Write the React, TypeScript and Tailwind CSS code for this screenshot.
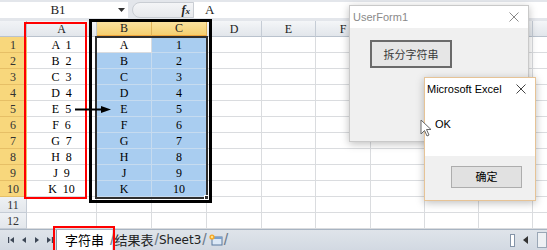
import React from "react";

const serif = "font-['Liberation_Serif','Noto_Sans_CJK_SC',serif]";
const sans = "font-['Liberation_Sans','Noto_Sans_CJK_SC',sans-serif]";

const colW = [
  "w-[70px]",
  "w-[55px]",
  "w-[55px]",
  "w-[55px]",
  "w-[54px]",
  "w-[55px]",
  "w-[54px]",
  "w-[54px]",
  "w-[54px]",
  "w-[54px]",
];
const letters = ["A", "B", "C", "D", "E", "F", "G", "H", "I", ""];
const aVals = ["A  1", "B  2", "C  3", "D  4", "E  5", "F  6", "G  7", "H  8", "J  9", "K  10"];
const bVals = ["A", "B", "C", "D", "E", "F", "G", "H", "J", "K"];

function XIcon({ color = "#6b6b6b" }: { color?: string }) {
  return (
    <svg width="10" height="10" viewBox="0 0 10 10">
      <line x1="0.5" y1="0.5" x2="9.5" y2="9.5" stroke={color} strokeWidth="1" />
      <line x1="9.5" y1="0.5" x2="0.5" y2="9.5" stroke={color} strokeWidth="1" />
    </svg>
  );
}

function HeaderRow() {
  return (
    <div className="flex h-[16px]">
      <div className="w-[27px] h-full shrink-0 box-border border-r border-b border-[#b9c2cd] bg-gradient-to-b from-[#f1f3f6] to-[#e3e7ec]" />
      {letters.map((l, i) => {
        const sel = i === 1 || i === 2;
        return (
          <div
            key={i}
            className={
              colW[i] +
              " h-full shrink-0 box-border border-r flex items-center justify-center text-[12px] text-[#222] " +
              serif +
              (sel
                ? " bg-gradient-to-b from-[#fbe3a0] to-[#f5cf6f] border-[#e0b45a] border-b-2 border-b-[#f0a43a]"
                : " bg-gradient-to-b from-[#f4f6f8] to-[#e2e6eb] border-[#c5ccd5] border-b border-b-[#b9c2cd]")
            }
          >
            {l}
          </div>
        );
      })}
    </div>
  );
}

function DataRow({ r }: { r: number }) {
  const inData = r <= 10;
  return (
    <div className="flex h-[16px]">
      <div
        className={
          "w-[27px] h-full shrink-0 box-border border-r border-b flex items-center justify-center text-[12px] text-[#333] " +
          serif +
          (inData
            ? " bg-[#f8d77c] border-[#e6bf66]"
            : " bg-gradient-to-b from-[#eef1f4] to-[#e3e7ec] border-[#c5ccd5]")
        }
      >
        {r}
      </div>
      {letters.map((l, i) => {
        let text = "";
        let cls = " bg-white border-[#dadcdf]";
        if (inData && i === 0) text = aVals[r - 1];
        if (inData && i === 1) {
          text = bVals[r - 1];
          if (r > 1) cls = " bg-[#a9cdf0] border-[#c6dbef]";
        }
        if (inData && i === 2) {
          text = String(r);
          cls = " bg-[#a9cdf0] border-[#c6dbef]";
        }
        return (
          <div
            key={i}
            className={
              colW[i] +
              " h-full shrink-0 box-border border-r border-b flex items-center justify-center text-[12px] text-black whitespace-pre " +
              serif +
              cls
            }
          >
            {text}
          </div>
        );
      })}
    </div>
  );
}

function NavArrow({ kind }: { kind: number }) {
  return (
    <svg width="8" height="8" viewBox="0 0 8 8">
      {kind === 0 && (
        <>
          <rect x="1" y="1" width="1.2" height="6" fill="#3d4756" />
          <polygon points="7,1 3,4 7,7" fill="#3d4756" />
        </>
      )}
      {kind === 1 && <polygon points="6,1 2,4 6,7" fill="#3d4756" />}
      {kind === 2 && <polygon points="2,1 6,4 2,7" fill="#3d4756" />}
      {kind === 3 && (
        <>
          <polygon points="1,1 5,4 1,7" fill="#3d4756" />
          <rect x="5.8" y="1" width="1.2" height="6" fill="#3d4756" />
        </>
      )}
    </svg>
  );
}

export default function App() {
  const rows = Array.from({ length: 12 }, (_, i) => i + 1);
  return (
    <div className="relative w-[547px] h-[250px] overflow-hidden bg-white">
      {/* formula bar */}
      <div className="flex h-[21px] bg-[#e3e6eb] pt-[2px] pb-[3px] box-border">
        <div className={"relative w-[128px] h-full bg-white flex items-center justify-center text-[13px] text-[#222] " + serif}>
          <span className="pr-[12px]">B1</span>
          <svg className="absolute right-[3px] top-[6px]" width="7" height="4" viewBox="0 0 7 4">
            <polygon points="0,0 7,0 3.5,4" fill="#333" />
          </svg>
        </div>
        <div className="w-[4px]" />
        <div className="w-[62px] h-full rounded-l-full border border-[#c9cdd3] bg-gradient-to-b from-[#f4f5f7] to-[#e6e8eb] flex items-center justify-end pr-[3px] box-border">
          <span className={"italic font-bold text-[12px] text-[#222] " + serif}>
            f<span className="text-[9px]">x</span>
          </span>
        </div>
        <div className={"flex-1 h-full bg-white flex items-center pl-[11px] text-[13px] text-[#222] " + serif}>A</div>
      </div>

      <HeaderRow />
      {rows.map((r) => (
        <DataRow key={r} r={r} />
      ))}

      {/* sheet tabs */}
      <div className="relative flex items-center h-[21px] bg-gradient-to-b from-[#dfe4ea] to-[#d2d9e2] border-t border-[#a8b4c2] box-border">
        <div className="flex items-center gap-[5px] pl-[7px] w-[56px] shrink-0">
          <NavArrow kind={0} />
          <NavArrow kind={1} />
          <NavArrow kind={2} />
          <NavArrow kind={3} />
        </div>
        <div className={"flex items-center h-full text-[13px] " + sans}>
          <div className="h-full bg-white flex items-center px-[8px] text-black font-['Noto_Sans_CJK_SC',sans-serif] border-l border-[#8c99a8] -mt-[1px]">
            字符串
          </div>
          <span className="text-[#6d7b8c] text-[16px] -ml-[2px]">/</span>
          <span className="text-[#222] font-['Noto_Sans_CJK_SC',sans-serif]">结果表</span>
          <span className="text-[#6d7b8c] text-[16px] ml-[1px]">/</span>
          <span className="text-[#222] font-['DejaVu_Sans',sans-serif] text-[12px]">Sheet3</span>
          <span className="text-[#6d7b8c] text-[16px] ml-[1px]">/</span>
          <svg width="16" height="14" viewBox="0 0 16 14" className="ml-[1px]">
            <rect x="4" y="4" width="10" height="8" fill="#dbe8f6" stroke="#5a7aa0" strokeWidth="1" />
            <rect x="4" y="4" width="10" height="2" fill="#7aa0cc" />
            <circle cx="4" cy="4" r="2.6" fill="#f5a623" />
            <circle cx="4" cy="4" r="1.2" fill="#ffe28a" />
          </svg>
          <span className="text-[#6d7b8c] text-[16px]">/</span>
        </div>
        <div className="flex-1" />
        <div className="flex items-center gap-[4px] pr-[0px]">
          <div className="w-[5px] h-[13px] bg-white border border-[#8494a8]" />
          <svg width="8" height="8" viewBox="0 0 8 8" className="ml-[3px]">
            <polygon points="6,0 1,4 6,8" fill="#333" />
          </svg>
          <div className="w-[10px] h-[16px] bg-[#eef1f4] border border-[#9aa7b6] ml-[3px]" />
        </div>
      </div>

      {/* selection border & fill handle */}
      <div className="absolute left-[95px] top-[36px] w-[113px] h-[163px] border-2 border-[#2e2e2e] pointer-events-none" />
      <div className="absolute left-[204px] top-[195px] w-[5px] h-[5px] bg-[#2e2e2e] border border-white" />

      {/* drawn rectangles */}
      <div className="absolute left-[24px] top-[22px] w-[63px] h-[177px] border-2 border-[#ff0000]" />
      <div className="absolute left-[89px] top-[19px] w-[123px] h-[184px] border-[3px] border-black" />
      <div className="absolute left-[53px] top-[226px] w-[62px] h-[30px] border-2 border-[#ff0000]" />

      {/* arrow */}
      <svg className="absolute left-[74px] top-[105px]" width="38" height="9" viewBox="0 0 38 9">
        <line x1="1" y1="4.5" x2="28" y2="4.5" stroke="#000" strokeWidth="2" />
        <polygon points="27,1 37,4.5 27,8" fill="#000" />
      </svg>

      {/* UserForm1 */}
      <div className="absolute left-[349px] top-[5px] w-[180px] h-[137px] bg-[#f0f0f0] border border-[#c9c9c9] shadow-[0_2px_8px_rgba(0,0,0,0.25)] flex flex-col">
        <div className="h-[22px] bg-white flex items-center justify-between pl-[3px] pr-[9px]">
          <span className={"text-[11px] text-[#8a8a8a] " + sans}>UserForm1</span>
          <XIcon color="#8a8a8a" />
        </div>
        <div className="pl-[20px] pt-[12px]">
          <div className="w-[82px] h-[28px] border-2 border-[#6a6a6a] bg-[#e6e6e6] flex items-center justify-center box-border">
            <span className="text-[11px] text-[#3a3a3a] font-['Noto_Sans_CJK_SC',sans-serif]">拆分字符串</span>
          </div>
        </div>
      </div>

      {/* Message box */}
      <div className="absolute left-[424px] top-[77px] w-[112px] h-[124px] bg-white border border-[#e6c396] shadow-[0_2px_8px_rgba(0,0,0,0.25)] flex flex-col">
        <div className="h-[22px] flex items-center justify-between pl-[2px] pr-[9px]">
          <span className={"text-[11px] text-black " + sans}>Microsoft Excel</span>
          <XIcon color="#444" />
        </div>
        <div className="flex-1 bg-white flex items-center pl-[10px] pb-[8px]">
          <span className={"text-[11px] text-black " + sans}>OK</span>
        </div>
        <div className="h-[44px] bg-[#f0f0f0] flex items-center justify-center pb-[3px]">
          <div className="w-[71px] h-[22px] border border-[#adadad] bg-[#e1e1e1] flex items-center justify-center ml-[13px]">
            <span className="text-[11px] text-black font-['Noto_Sans_CJK_SC',sans-serif]">确定</span>
          </div>
        </div>
      </div>

      {/* mouse cursor */}
      <svg className="absolute left-[420px] top-[119px]" width="13" height="19" viewBox="0 0 13 19">
        <path d="M1 1 L1 15 L4.5 11.5 L7 17 L9 16 L6.5 10.5 L11 10.5 Z" fill="#fff" stroke="#666" strokeWidth="1" strokeLinejoin="round" />
      </svg>
    </div>
  );
}
